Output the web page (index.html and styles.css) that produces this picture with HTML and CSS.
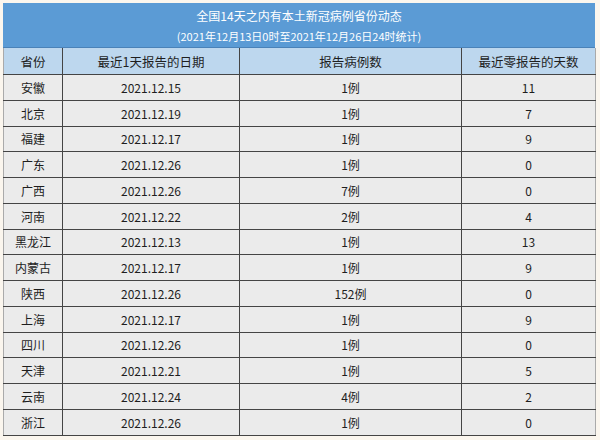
FILE: index.html
```html
<!DOCTYPE html>
<html lang="zh">
<head>
<meta charset="utf-8">
<link rel="stylesheet" href="styles.css">
</head>
<body>
<div class="wrap">
<div class="banner">
  <div class="title">全国14天之内有本土新冠病例省份动态</div>
  <div class="sub">(2021年12月13日0时至2021年12月26日24时统计)</div>
</div>
<table class="grid">
  <colgroup><col class="c1"><col class="c2"><col class="c3"><col class="c4"></colgroup>
  <thead>
    <tr><th>省份</th><th>最近1天报告的日期</th><th>报告病例数</th><th>最近零报告的天数</th></tr>
  </thead>
  <tbody>
    <tr><td>安徽</td><td>2021.12.15</td><td>1例</td><td>11</td></tr>
    <tr><td>北京</td><td>2021.12.19</td><td>1例</td><td>7</td></tr>
    <tr><td>福建</td><td>2021.12.17</td><td>1例</td><td>9</td></tr>
    <tr><td>广东</td><td>2021.12.26</td><td>1例</td><td>0</td></tr>
    <tr><td>广西</td><td>2021.12.26</td><td>7例</td><td>0</td></tr>
    <tr><td>河南</td><td>2021.12.22</td><td>2例</td><td>4</td></tr>
    <tr><td>黑龙江</td><td>2021.12.13</td><td>1例</td><td>13</td></tr>
    <tr><td>内蒙古</td><td>2021.12.17</td><td>1例</td><td>9</td></tr>
    <tr><td>陕西</td><td>2021.12.26</td><td>152例</td><td>0</td></tr>
    <tr><td>上海</td><td>2021.12.17</td><td>1例</td><td>9</td></tr>
    <tr><td>四川</td><td>2021.12.26</td><td>1例</td><td>0</td></tr>
    <tr><td>天津</td><td>2021.12.21</td><td>1例</td><td>5</td></tr>
    <tr><td>云南</td><td>2021.12.24</td><td>4例</td><td>2</td></tr>
    <tr><td>浙江</td><td>2021.12.26</td><td>1例</td><td>0</td></tr>
  </tbody>
</table>
</div>
</body>
</html>
```
FILE: styles.css
```css
html, body { margin: 0; padding: 0; }
body {
  background: #fbf6ee;
  font-family: "Noto Sans CJK SC", "Noto Sans", sans-serif;
  color: #1e1e1e;
}
.wrap {
  margin: 3px 5px 0 3px;
  width: 592px;
}
.banner {
  background: #5b9bd5;
  color: #fff;
  height: 44px;
  text-align: center;
  display: flex;
  flex-direction: column;
  justify-content: center;
  gap: 6px;
  border-bottom: 1px solid #4a82b8;
}
.title { font-size: 12px; line-height: 15px; }
.sub { font-size: 11px; line-height: 14px; }
.grid {
  width: 592px;
  border-collapse: collapse;
  table-layout: fixed;
  font-size: 12px;
}
.c1 { width: 59px; }
.c2 { width: 177px; }
.c3 { width: 222px; }
.c4 { width: 134px; }
.grid th {
  background: #bdd7ee;
  font-weight: normal;
  height: 26px;
  padding: 0;
  border: 1px solid #444;
  border-top: none;
  font-size: 12.5px;
}
.grid td {
  background: #ebebeb;
  height: 24.75px;
  padding: 0;
  text-align: center;
  border: 1px solid #444;
}
.grid tr > :first-child { border-left-color: #aaa; }
.grid tr > :last-child { border-right-color: #aaa; }
```
